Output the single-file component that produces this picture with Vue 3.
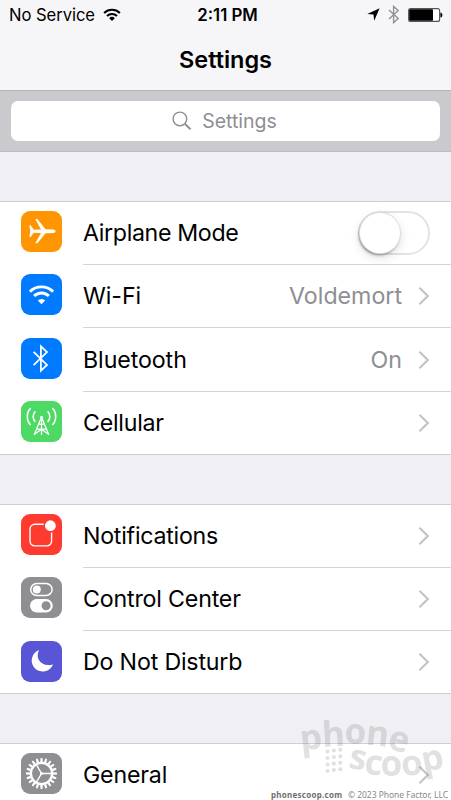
<script setup>
const groups = [
  {
    id: 'radios',
    rows: [
      { label: 'Airplane Mode', icon: 'airplane', toggle: true },
      { label: 'Wi-Fi', icon: 'wifi', value: 'Voldemort' },
      { label: 'Bluetooth', icon: 'bluetooth', value: 'On', tall: true },
      { label: 'Cellular', icon: 'cellular' },
    ],
  },
  {
    id: 'alerts',
    rows: [
      { label: 'Notifications', icon: 'notifications' },
      { label: 'Control Center', icon: 'control' },
      { label: 'Do Not Disturb', icon: 'moon' },
    ],
  },
  { id: 'system', rows: [{ label: 'General', icon: 'gear' }] },
]
const teeth = Array.from({ length: 20 }, (_, i) => i * 18)
const dots = [0, 1, 2, 3].flatMap((r) => [0, 1, 2].map((c) => ({ x: 327.5 + c * 6.4, y: 751.5 + r * 6.5 - c * 0.9 })))
</script>

<template>
  <main class="screen">
    <header class="top">
      <div class="status">
        <div class="carrier">
          <span class="service">No Service</span>
          <svg class="status-wifi" width="18" height="14" viewBox="0 0 18 14" fill="none" stroke="#000" stroke-width="2.1">
            <path d="M1.1 4.9a11.5 11.5 0 0 1 15.8 0M4 8a7.3 7.3 0 0 1 10 0" />
            <path d="M9 13 6.2 10.2a4 4 0 0 1 5.6 0Z" fill="#000" stroke="none" />
          </svg>
        </div>
        <span class="time">2:11 PM</span>
        <div class="indicators">
          <svg width="13" height="13" viewBox="0 0 13 13"><path d="M12.6.3 7.2 12.7 6.5 6.6.3 5.9Z" /></svg>
          <svg class="status-bt" width="12" height="19" viewBox="0 0 12 19" fill="none" stroke="#929296" stroke-width="1.4">
            <path d="m1 5 9.2 8.5-4.6 4.1V1.4l4.6 4.1L1 14" />
          </svg>
          <svg width="35" height="14" viewBox="0 0 35 14">
            <rect x=".6" y=".6" width="31" height="12.8" rx="2" fill="#fff" stroke="#555" stroke-width="1.1" />
            <rect x="1.2" y="1.2" width="23.8" height="11.6" rx="1" />
            <path d="M32.4 4.4c2.6.5 2.6 4.7 0 5.2Z" />
          </svg>
        </div>
      </div>
      <h1>Settings</h1>
    </header>

    <div class="search-bar">
      <div class="search-field">
        <svg width="20" height="20" viewBox="0 0 20 20" fill="none" stroke="#8e8e93">
          <circle cx="7.9" cy="7.9" r="6.8" stroke-width="1.4" />
          <path d="m13 13 5.6 5.4" stroke-width="2" />
        </svg>
        <span>Settings</span>
      </div>
    </div>

    <section v-for="group in groups" :key="group.id" class="group">
      <div v-for="row in group.rows" :key="row.label" class="row" :class="{ tall: row.tall }">
        <svg class="icon" :class="row.icon" viewBox="0 0 41 41" fill="none">
          <path
            v-if="row.icon === 'airplane'"
            d="M8.3 14.3h1.3l3.2 4.4 7.2-.2-5.7-10.4h2.1l8.1 10.2 7.7.2c3.2.2 3.2 3.3 0 3.5l-7.7.2-8.1 10h-2.1L20 22l-7.2-.2-3.2 4.1H8.3l1-5.7Z"
            fill="#fff"
          />
          <g v-else-if="row.icon === 'wifi'" stroke="#fff" stroke-width="2.9">
            <path d="M8.9 17.6a16.7 16.7 0 0 1 23.2 0M13.1 22.1a10.4 10.4 0 0 1 14.8 0" />
            <path d="m20.5 30.2-3.7-3.8a5.3 5.3 0 0 1 7.4 0Z" fill="#fff" stroke="none" />
          </g>
          <path v-else-if="row.icon === 'bluetooth'" d="m12.6 13.9 13.4 13-6.1 5.7V8.4l6.1 5.7-13.4 13" stroke="#fff" stroke-width="1.8" />
          <g v-else-if="row.icon === 'cellular'" stroke="#fff" stroke-width="1.6">
            <path d="M9.7 7.2c-4.5 4-4.5 12.8 0 16.8M14.4 10.3c-3 2.6-3 8 0 10.6M31.3 7.2c4.5 4 4.5 12.8 0 16.8M26.6 10.3c3 2.6 3 8 0 10.6" />
            <path d="m20.5 16-7.4 18M20.5 16l7.4 18M20.5 16v18M17.8 23.2h5.4M15.6 28.2h9.8M13.2 33.6l7.3-5.4 7.3 5.4" stroke-width="1.25" />
            <circle cx="20.5" cy="16.2" r="1.5" fill="#fff" stroke="none" />
          </g>
          <g v-else-if="row.icon === 'notifications'">
            <rect x="9" y="10.3" width="21.6" height="21.6" rx="4.8" stroke="#fff" stroke-width="1.4" />
            <circle cx="29.4" cy="11.7" r="7" fill="#ff3b30" />
            <circle cx="29.4" cy="11.7" r="5.4" fill="#fff" />
          </g>
          <g v-else-if="row.icon === 'control'">
            <rect x="9.7" y="6.4" width="21.4" height="12" rx="6" stroke="#fff" stroke-width="1.5" />
            <circle cx="15.8" cy="12.4" r="4" fill="#fff" />
            <rect x="9" y="22" width="22.8" height="13.4" rx="6.7" fill="#fff" />
            <circle cx="25.1" cy="28.7" r="4.5" fill="#8e8e93" />
          </g>
          <path v-else-if="row.icon === 'moon'" d="M18.2 9.1c-4.7 7.9 1.8 17.7 13.8 14.3A11 11 0 1 1 18.2 9.1Z" fill="#fff" />
          <g v-else stroke="#fff">
            <path v-for="angle in teeth" :key="angle" d="M19.2 9 19.6 5h1.8l.4 4Z" :transform="`rotate(${angle} 20.5 20.5)`" fill="#fff" stroke="none" />
            <circle cx="20.5" cy="20.5" r="10.6" stroke-width="2.3" />
            <path d="M20.5 20.5H31M20.5 20.5l-5.3-9.1M20.5 20.5l-5.3 9.1" stroke-width="1.4" />
            <circle cx="20.5" cy="20.5" r="1.5" fill="#fff" stroke="none" />
          </g>
        </svg>
        <div class="body">
          <span class="label" :class="'text-' + row.icon">{{ row.label }}</span>
          <span v-if="row.value" class="value">{{ row.value }}</span>
          <span v-if="row.toggle" class="switch"><span class="knob"></span></span>
          <svg v-else class="chevron" width="12" height="20" viewBox="0 0 12 20" fill="none" stroke="#c2c2c7" stroke-width="2.1">
            <path d="m1.5 1.8 8.3 8.2-8.3 8.2" />
          </svg>
        </div>
      </div>
    </section>

    <svg class="watermark" width="451" height="800" viewBox="0 0 451 800">
      <g fill="#77777d" fill-opacity=".23">
        <text class="brand" x="301 322.5 344.5 365 386.5" y="750.5 747 744 744.5 748.5" rotate="-6 -3 0 6 13">phone</text>
        <text class="brand" x="347.5 363.5 380.5 402 423.5" y="767.5 773.5 776 776 772" rotate="11 7 0 -5 -11">scoop</text>
        <circle v-for="(dot, i) in dots" :key="i" :cx="dot.x" :cy="dot.y" r="2" />
      </g>
      <text class="site" x="271" y="797.5" textLength="71">phonescoop.com</text>
      <text class="copyright" x="348" y="797.5" textLength="100">© 2023 Phone Factor, LLC</text>
    </svg>
  </main>
</template>

<style>
body {
  margin: 0;
  overflow: hidden;
}
</style>

<style scoped>
.screen {
  position: relative;
  width: 451px;
  height: 800px;
  overflow: hidden;
  background: #efeff4;
  font-family: Inter, "Liberation Sans", sans-serif;
  color: #000;
}
.top {
  height: 90px;
  background: #f6f6f8;
  border-bottom: 1px solid #b4b4b8;
}
.status {
  display: grid;
  grid-template-columns: 1fr auto 1fr;
  align-items: center;
  height: 29px;
  padding: 0 8px 0 9px;
  font-size: 16.6px;
}
.carrier {
  display: flex;
  align-items: center;
  gap: 8px;
}
.service {
  letter-spacing: -0.05px;
}
.time {
  padding-left: 3px;
  font-weight: 600;
  font-size: 16.8px;
}
.indicators {
  display: flex;
  align-items: center;
  justify-content: flex-end;
  gap: 8px;
}
h1 {
  margin: 0;
  padding-top: 16px;
  font-size: 23.5px;
  line-height: 30px;
  font-weight: 600;
  letter-spacing: -0.05px;
  text-align: center;
}
.search-bar {
  box-sizing: border-box;
  height: 61px;
  padding: 10px 11px;
  background: #c9c9ce;
  border-bottom: 1px solid #bcbcc1;
}
.search-field {
  display: flex;
  align-items: center;
  justify-content: center;
  gap: 10px;
  height: 40px;
  padding-right: 2px;
  border-radius: 7px;
  box-sizing: border-box;
  background: #fff;
  color: #8e8e93;
  font-size: 19.5px;
}
.group {
  margin-top: 49px;
  border-top: 1px solid #cfcfd3;
  border-bottom: 1px solid #cfcfd3;
  background: #fff;
}
.row {
  display: flex;
  height: 63px;
}
.row.tall {
  height: 64px;
}
.row:last-child {
  height: 62px;
}
.icon {
  flex: none;
  width: 41px;
  height: 41px;
  margin: 9px 21px 0;
  border-radius: 9px;
}
.airplane {
  background: #ff9500;
}
.wifi,
.bluetooth {
  background: #007aff;
}
.bluetooth,
.moon {
  margin-top: 10px;
}
.cellular {
  background: #4cd964;
}
.notifications {
  background: #ff3b30;
}
.control,
.gear {
  background: #8e8e93;
}
.moon {
  background: #5856d6;
}
.body {
  display: flex;
  flex: 1;
  align-items: center;
  box-sizing: border-box;
  padding-right: 21px;
  border-bottom: 1px solid #d4d4d7;
  font-size: 23.2px;
}
.row:last-child .body {
  border-bottom: 0;
}
.label {
  flex: 1;
  letter-spacing: -0.18px;
}
.text-airplane {
  letter-spacing: -0.35px;
}
.text-wifi,
.text-bluetooth {
  letter-spacing: -0.08px;
}
.text-cellular,
.text-notifications {
  letter-spacing: -0.25px;
}
.value {
  color: #8e8e93;
}
.chevron {
  margin-left: 16px;
}
.switch {
  box-sizing: border-box;
  width: 72px;
  height: 44px;
  border: 2px solid #e3e3e5;
  border-radius: 22px;
}
.knob {
  display: block;
  width: 40px;
  height: 40px;
  border-radius: 50%;
  background: #fff;
  box-shadow: 0 0 0 1px #dedee0, -1px 2px 3px #0006, 0 4px 12px #0002;
}
.watermark {
  position: absolute;
  inset: 0;
}
.brand {
  font: 700 35px "Open Sans", sans-serif;
}
.site {
  font: 700 8px "Noto Sans", sans-serif;
  fill: #6f6f74;
}
.copyright {
  font: 400 8.5px "Noto Sans", sans-serif;
  fill: #88888c;
}
</style>
